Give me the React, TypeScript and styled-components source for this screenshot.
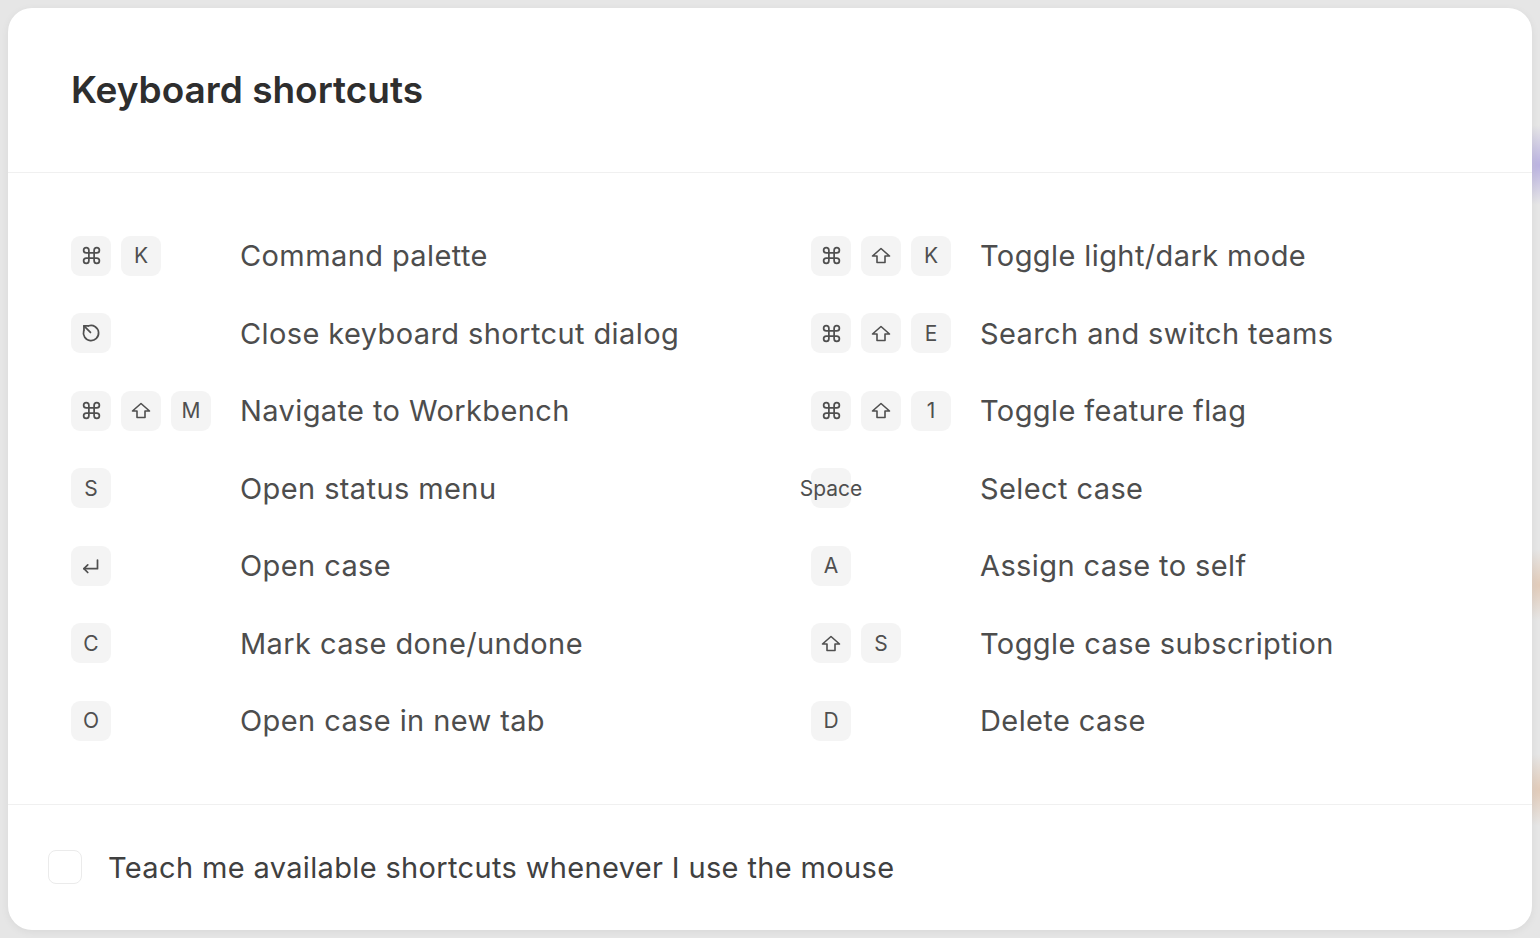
import React from "react";
import styled, { createGlobalStyle } from "styled-components";

const GlobalStyle = createGlobalStyle`
  html, body {
    margin: 0;
    padding: 0;
  }
  body {
    font-family: Inter, "Noto Sans", "Liberation Sans", sans-serif;
    background: #e6e6e6;
  }
`;

const Page = styled.div`
  position: relative;
  width: 1540px;
  height: 938px;
  padding: 8px 8px 0 8px;
  box-sizing: border-box;
  overflow: hidden;
  background:
    radial-gradient(circle at 1540px 165px, rgba(150, 135, 220, 0.55) 0, rgba(150, 135, 220, 0) 40px),
    radial-gradient(circle at 1540px 585px, rgba(220, 170, 130, 0.45) 0, rgba(220, 170, 130, 0) 36px),
    radial-gradient(circle at 1540px 790px, rgba(220, 170, 130, 0.45) 0, rgba(220, 170, 130, 0) 36px),
    #e6e6e6;
`;

const Dialog = styled.div`
  width: 1524px;
  height: 922px;
  box-sizing: border-box;
  background: #ffffff;
  border-radius: 24px;
  box-shadow: 0 2px 8px rgba(0, 0, 0, 0.06);
  display: flex;
  flex-direction: column;
`;

const Header = styled.div`
  height: 165px;
  box-sizing: border-box;
  display: flex;
  align-items: center;
  padding: 0 0 2px 63px;
  border-bottom: 1px solid #f0f0f0;
`;

const Title = styled.h1`
  margin: 0;
  font-size: 37px;
  font-weight: 600;
  color: #2e2e2e;
  letter-spacing: 0;
`;

const Body = styled.div`
  padding: 44px 0 44px 63px;
  display: grid;
  grid-template-columns: 740px 1fr;
  grid-auto-rows: 77.5px;
  border-bottom: 1px solid #f0f0f0;
`;

const Row = styled.div`
  display: flex;
  align-items: center;
`;

const Keys = styled.div`
  width: 170px;
  flex-shrink: 0;
  display: flex;
  gap: 10px;
`;

const Key = styled.div`
  width: 40px;
  height: 40px;
  flex-shrink: 0;
  border-radius: 9px;
  background: #f4f4f4;
  color: #4f4f4f;
  font-size: 21px;
  display: flex;
  align-items: center;
  justify-content: center;
  white-space: nowrap;
  svg {
    display: block;
    flex-shrink: 0;
  }
`;

const Label = styled.span`
  font-size: 29px;
  color: #4d4d4d;
  letter-spacing: 0.4px;
  margin-left: -1px;
`;

const Footer = styled.label`
  flex: 1;
  display: flex;
  align-items: center;
  gap: 26px;
  padding: 0 0 0 40px;
`;

const Checkbox = styled.span`
  width: 34px;
  height: 34px;
  box-sizing: border-box;
  border: 1.5px solid #ebebeb;
  border-radius: 8px;
  background: #fff;
`;

const FooterText = styled.span`
  font-size: 29px;
  color: #404040;
  letter-spacing: 0.35px;
`;

const Cmd = () => (
  <svg width="21" height="21" viewBox="0 0 24 24" fill="none" stroke="#4f4f4f" strokeWidth="2" strokeLinecap="round" strokeLinejoin="round">
    <path d="M15 6v12a3 3 0 1 0 3-3H6a3 3 0 1 0 3 3V6a3 3 0 1 0-3 3h12a3 3 0 1 0-3-3" />
  </svg>
);

const Shift = () => (
  <svg width="20" height="17" viewBox="0 0 20 17" fill="none" stroke="#4f4f4f" strokeWidth="1.6" strokeLinejoin="round">
    <path d="M10 1.5 L18.5 9 H14 V15.5 H6 V9 H1.5 Z" />
  </svg>
);

const Esc = () => (
  <svg width="26" height="26" viewBox="0 0 24 24" fill="none" stroke="#4f4f4f" strokeWidth="1.6" strokeLinecap="round" strokeLinejoin="round">
    <path d="M10 5.3 A7 7 0 1 1 5.3 10" />
    <path d="M11.5 11.5 L5.5 5.5" />
    <path d="M5.5 9.5 V5.5 H9.5" />
  </svg>
);

const Enter = () => (
  <svg width="26" height="26" viewBox="0 0 24 24" fill="none" stroke="#4f4f4f" strokeWidth="1.6" strokeLinecap="round" strokeLinejoin="round">
    <path d="M18 6.5 V14.5 H5.5" />
    <path d="M9 11 L5.5 14.5 L9 18" />
  </svg>
);

type Shortcut = {
  keys: React.ReactNode[];
  label: string;
};

const left: Shortcut[] = [
  { keys: [<Cmd />, "K"], label: "Command palette" },
  { keys: [<Esc />], label: "Close keyboard shortcut dialog" },
  { keys: [<Cmd />, <Shift />, "M"], label: "Navigate to Workbench" },
  { keys: ["S"], label: "Open status menu" },
  { keys: [<Enter />], label: "Open case" },
  { keys: ["C"], label: "Mark case done/undone" },
  { keys: ["O"], label: "Open case in new tab" },
];

const right: Shortcut[] = [
  { keys: [<Cmd />, <Shift />, "K"], label: "Toggle light/dark mode" },
  { keys: [<Cmd />, <Shift />, "E"], label: "Search and switch teams" },
  { keys: [<Cmd />, <Shift />, "1"], label: "Toggle feature flag" },
  { keys: ["Space"], label: "Select case" },
  { keys: ["A"], label: "Assign case to self" },
  { keys: [<Shift />, "S"], label: "Toggle case subscription" },
  { keys: ["D"], label: "Delete case" },
];

const ShortcutRow: React.FC<{ item: Shortcut }> = ({ item }) => (
  <Row>
    <Keys>
      {item.keys.map((k, i) => (
        <Key key={i}>{k}</Key>
      ))}
    </Keys>
    <Label>{item.label}</Label>
  </Row>
);

const App: React.FC = () => {
  const rows = left.flatMap((l, i) => [l, right[i]]);

  return (
    <Page>
      <GlobalStyle />
      <Dialog>
        <Header>
          <Title>Keyboard shortcuts</Title>
        </Header>
        <Body>
          {rows.map((item, i) => (
            <ShortcutRow key={i} item={item} />
          ))}
        </Body>
        <Footer>
          <Checkbox />
          <FooterText>Teach me available shortcuts whenever I use the mouse</FooterText>
        </Footer>
      </Dialog>
    </Page>
  );
};

export default App;
